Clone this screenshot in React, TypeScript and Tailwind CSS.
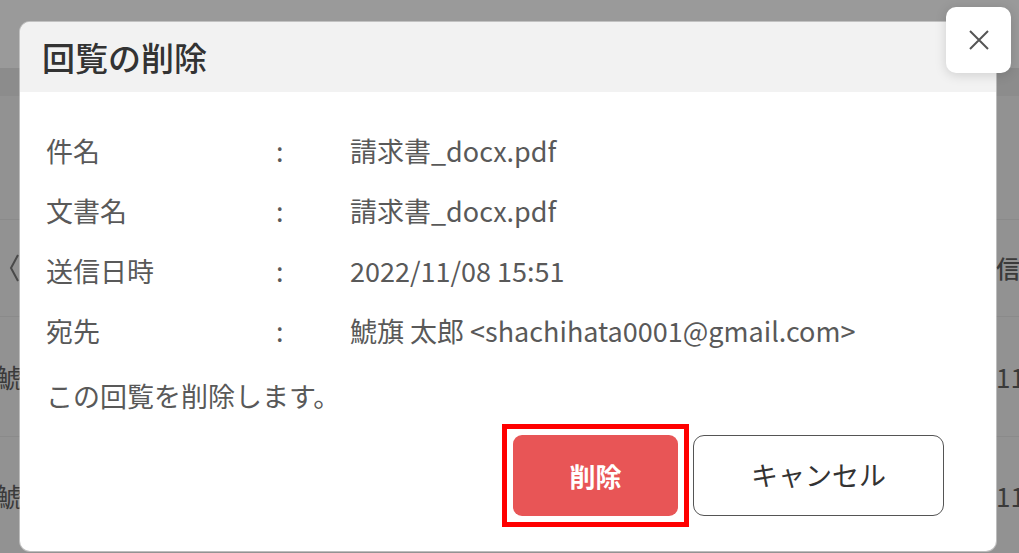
import React from 'react';

const rows = [
    { label: '件名', value: '請求書_docx.pdf' },
    { label: '文書名', value: '請求書_docx.pdf' },
    { label: '送信日時', value: '2022/11/08 15:51' },
    { label: '宛先', value: '鯱旗 太郎 <shachihata0001@gmail.com>' },
];

const font = { fontFamily: '"Noto Sans CJK JP", "Noto Sans", sans-serif' };

export default function App() {
    return (
        <div className="relative w-[1019px] h-[553px] overflow-hidden bg-[#929292]" style={font}>
            {/* Page behind the overlay */}
            <div className="flex flex-col">
                <div className="h-[68px] bg-[#9a9a9a]"></div>
                <div className="h-[28px] bg-[#8c8c8c]"></div>
                <div className="h-[124px] bg-[#929292] border-b border-[#8a8a8a]"></div>
                <div className="h-[97px] flex items-center justify-between border-b border-[#8a8a8a] text-[24px] text-[#3a3a3a]">
                    <svg width="12" height="30" viewBox="0 0 12 30" className="ml-[8px]">
                        <path d="M10 2 L3 15 L10 28" fill="none" stroke="#4a4a4a" strokeWidth="2" />
                    </svg>
                    <span className="w-[23px] overflow-hidden whitespace-nowrap font-medium">信日時</span>
                </div>
                <div className="h-[120px] flex items-center justify-between border-b border-[#8a8a8a] text-[26px] text-[#3a3a3a]">
                    <span className="-ml-[4px]">鯱旗 太郎</span>
                    <span className="w-[23px] overflow-hidden whitespace-nowrap">11/08</span>
                </div>
                <div className="h-[116px] flex items-center justify-between text-[26px] text-[#3a3a3a]">
                    <span className="-ml-[4px]">鯱旗 太郎</span>
                    <span className="w-[23px] overflow-hidden whitespace-nowrap">11/08</span>
                </div>
            </div>

            {/* Modal */}
            <div className="absolute left-[20px] top-[22px] w-[976px] h-[529px] bg-white rounded-[10px] shadow-[0_0_0_1px_rgba(255,255,255,0.4)] flex flex-col">
                <div className="h-[70px] bg-[#f2f2f2] rounded-t-[10px] flex items-center pl-[22px]">
                    <h2 className="text-[33px] font-medium text-[#333333] leading-none">回覧の削除</h2>
                </div>

                <div className="pt-[29px] pl-[26px] text-[27px] text-[#595959]">
                    {rows.map((r) => (
                        <div key={r.label} className="grid grid-cols-[230px_74px_1fr] h-[60px] items-center">
                            <span>{r.label}</span>
                            <span>:</span>
                            <span>{r.value}</span>
                        </div>
                    ))}
                    <div className="h-[60px] mt-[5px] flex items-center">この回覧を削除します。</div>
                </div>

                <div className="flex justify-end items-center gap-[4px] pr-[52px] -mt-[2px]">
                    <div className="border-[5px] border-[#ff0000] p-[6px]">
                        <button className="w-[165px] h-[81px] rounded-[9px] bg-[#e85556] text-white text-[26px] font-bold">
                            削除
                        </button>
                    </div>
                    <button className="w-[251px] h-[81px] rounded-[11px] border-[1.5px] border-[#555555] bg-white text-[#333333] text-[27px]">
                        キャンセル
                    </button>
                </div>
            </div>

            {/* Close button */}
            <button
                className="absolute left-[946px] top-[7px] w-[65px] h-[66px] bg-white rounded-[10px] shadow-[0_2px_12px_rgba(0,0,0,0.15)] flex items-center justify-center"
                aria-label="Close"
            >
                <svg width="20" height="20" viewBox="0 0 20 20">
                    <path d="M1 1 L19 19 M19 1 L1 19" stroke="#555555" strokeWidth="2" />
                </svg>
            </button>
        </div>
    );
}
